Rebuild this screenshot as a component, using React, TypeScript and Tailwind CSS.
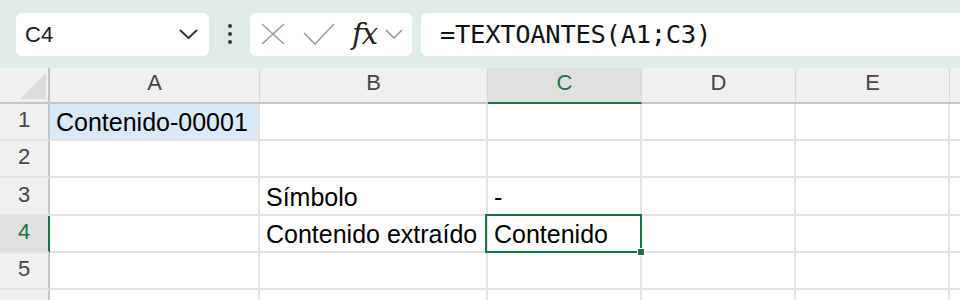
import React from 'react';

const COLS = ['A', 'B', 'C', 'D', 'E', 'F'];
const COL_W = ['w-[210px]', 'w-[228px]', 'w-[154px]', 'w-[154px]', 'w-[154px]', 'w-[154px]'];
const ROW_H = ['h-[37px]', 'h-[37px]', 'h-[38px]', 'h-[37px]', 'h-[37px]', 'h-[37px]'];

const cells: Record<string, string> = {
  A1: 'Contenido-00001',
  B3: 'Símbolo',
  C3: '-',
  B4: 'Contenido extraído',
  C4: 'Contenido',
};

function Toolbar() {
  return (
    <div className="h-[68px] bg-[#e0ece6] flex items-center pl-4 overflow-hidden">
      {/* name box */}
      <div className="w-[193px] h-[43px] shrink-0 bg-white rounded-md flex items-center justify-between pl-[9px] pr-[11px]">
        <span className="text-[22px] text-[#1a1a1a]">C4</span>
        <svg width="19" height="11" viewBox="0 0 19 11" fill="none">
          <path d="M1.5 1.5 L9.5 9 L17.5 1.5" stroke="#333" strokeWidth="2" strokeLinecap="round" strokeLinejoin="round" />
        </svg>
      </div>

      <div className="w-[41px] shrink-0 flex flex-col items-center gap-[4px]">
        <span className="w-[4px] h-[4px] rounded-full bg-[#333]" />
        <span className="w-[4px] h-[4px] rounded-full bg-[#333]" />
        <span className="w-[4px] h-[4px] rounded-full bg-[#333]" />
      </div>

      {/* cancel / enter / fx */}
      <div className="w-[162px] h-[43px] shrink-0 bg-white rounded-md flex items-center pl-[11px]">
        <svg width="24" height="22" viewBox="0 0 24 22" fill="none">
          <path d="M1 1 L23 21 M23 1 L1 21" stroke="#9c9c9c" strokeWidth="1.6" />
        </svg>
        <svg className="ml-[18px]" width="32" height="22" viewBox="0 0 32 22" fill="none">
          <path d="M1 10 L12 21 L31 1" stroke="#9c9c9c" strokeWidth="1.6" />
        </svg>
        <span className="ml-[17px] text-[29px] italic leading-none text-[#222] [font-family:'DejaVu_Serif',serif] tracking-[-1px]">fx</span>
        <svg className="ml-[8px]" width="18" height="10" viewBox="0 0 18 10" fill="none">
          <path d="M1 1 L9 9 L17 1" stroke="#8a8a8a" strokeWidth="1.4" />
        </svg>
      </div>

      {/* formula input */}
      <div className="ml-[9px] w-[600px] h-[43px] shrink-0 bg-white rounded-md flex items-center pl-[19px]">
        <span className="text-[25.5px] text-[#111] [font-family:'DejaVu_Sans_Mono',monospace] tracking-[-0.3px]">
          =TEXTOANTES(A1;C3)
        </span>
      </div>
    </div>
  );
}

function HeaderRow() {
  return (
    <div className="flex h-[36px] border-b-2 border-[#c4c4c4] bg-[#f0f0f0]">
      <div className="w-[50px] shrink-0 border-r-2 border-[#c4c4c4] relative">
        <svg className="absolute left-[20px] top-[5px]" width="26" height="26" viewBox="0 0 26 26">
          <path d="M26 0 L26 26 L0 26 Z" fill="#dcdcdc" />
        </svg>
      </div>
      {COLS.map((c, i) => {
        const sel = c === 'C';
        return (
          <div
            key={c}
            className={`${COL_W[i]} shrink-0 flex items-end justify-center pb-[3px] text-[22px] border-r border-[#d8d8d8] ${
              sel ? 'bg-[#e0e0e0] text-[#1e7145] border-b-2 border-b-[#1e7145] -mb-[2px]' : 'text-[#444]'
            }`}
          >
            {c === 'F' ? '' : c}
          </div>
        );
      })}
    </div>
  );
}

function Row({ n }: { n: number }) {
  const sel = n === 4;
  return (
    <div className={`flex ${ROW_H[n - 1]}`}>
      <div
        className={`w-[50px] shrink-0 flex items-end justify-center pb-[3px] text-[22px] border-b-2 border-[#e3e3e3] border-r-2 ${
          sel ? 'bg-[#e0e0e0] text-[#1e7145] border-r-[#1e7145]' : 'bg-[#f0f0f0] text-[#444] border-r-[#c4c4c4]'
        }`}
      >
        {n < 6 ? n : ''}
      </div>
      {COLS.map((c, i) => {
        const key = `${c}${n}`;
        const text = cells[key];
        const active = key === 'C4';
        return (
          <div
            key={key}
            className={`${COL_W[i]} shrink-0 relative flex items-end pl-[6px] pb-[3px] border-r-2 border-b-2 border-[#e3e3e3] whitespace-nowrap text-[25px] leading-[28px] text-black ${
              key === 'A1' ? 'bg-[#dae9f8]' : 'bg-white'
            } ${active ? 'z-10' : ''}`}
          >
            {text}
            {active && (
              <>
                <div className="absolute left-[-3px] top-[-2px] right-[-2px] bottom-[-2px] border-2 border-[#1e7145]" />
                <div className="absolute right-[-5px] bottom-[-5px] w-[8px] h-[8px] bg-[#1e7145] border border-white" />
              </>
            )}
          </div>
        );
      })}
    </div>
  );
}

export default function App() {
  return (
    <div className="w-[960px] h-[300px] overflow-hidden bg-white [font-family:'Liberation_Sans',Arial,sans-serif]">
      <Toolbar />
      <HeaderRow />
      {[1, 2, 3, 4, 5, 6].map((n) => (
        <Row key={n} n={n} />
      ))}
    </div>
  );
}
